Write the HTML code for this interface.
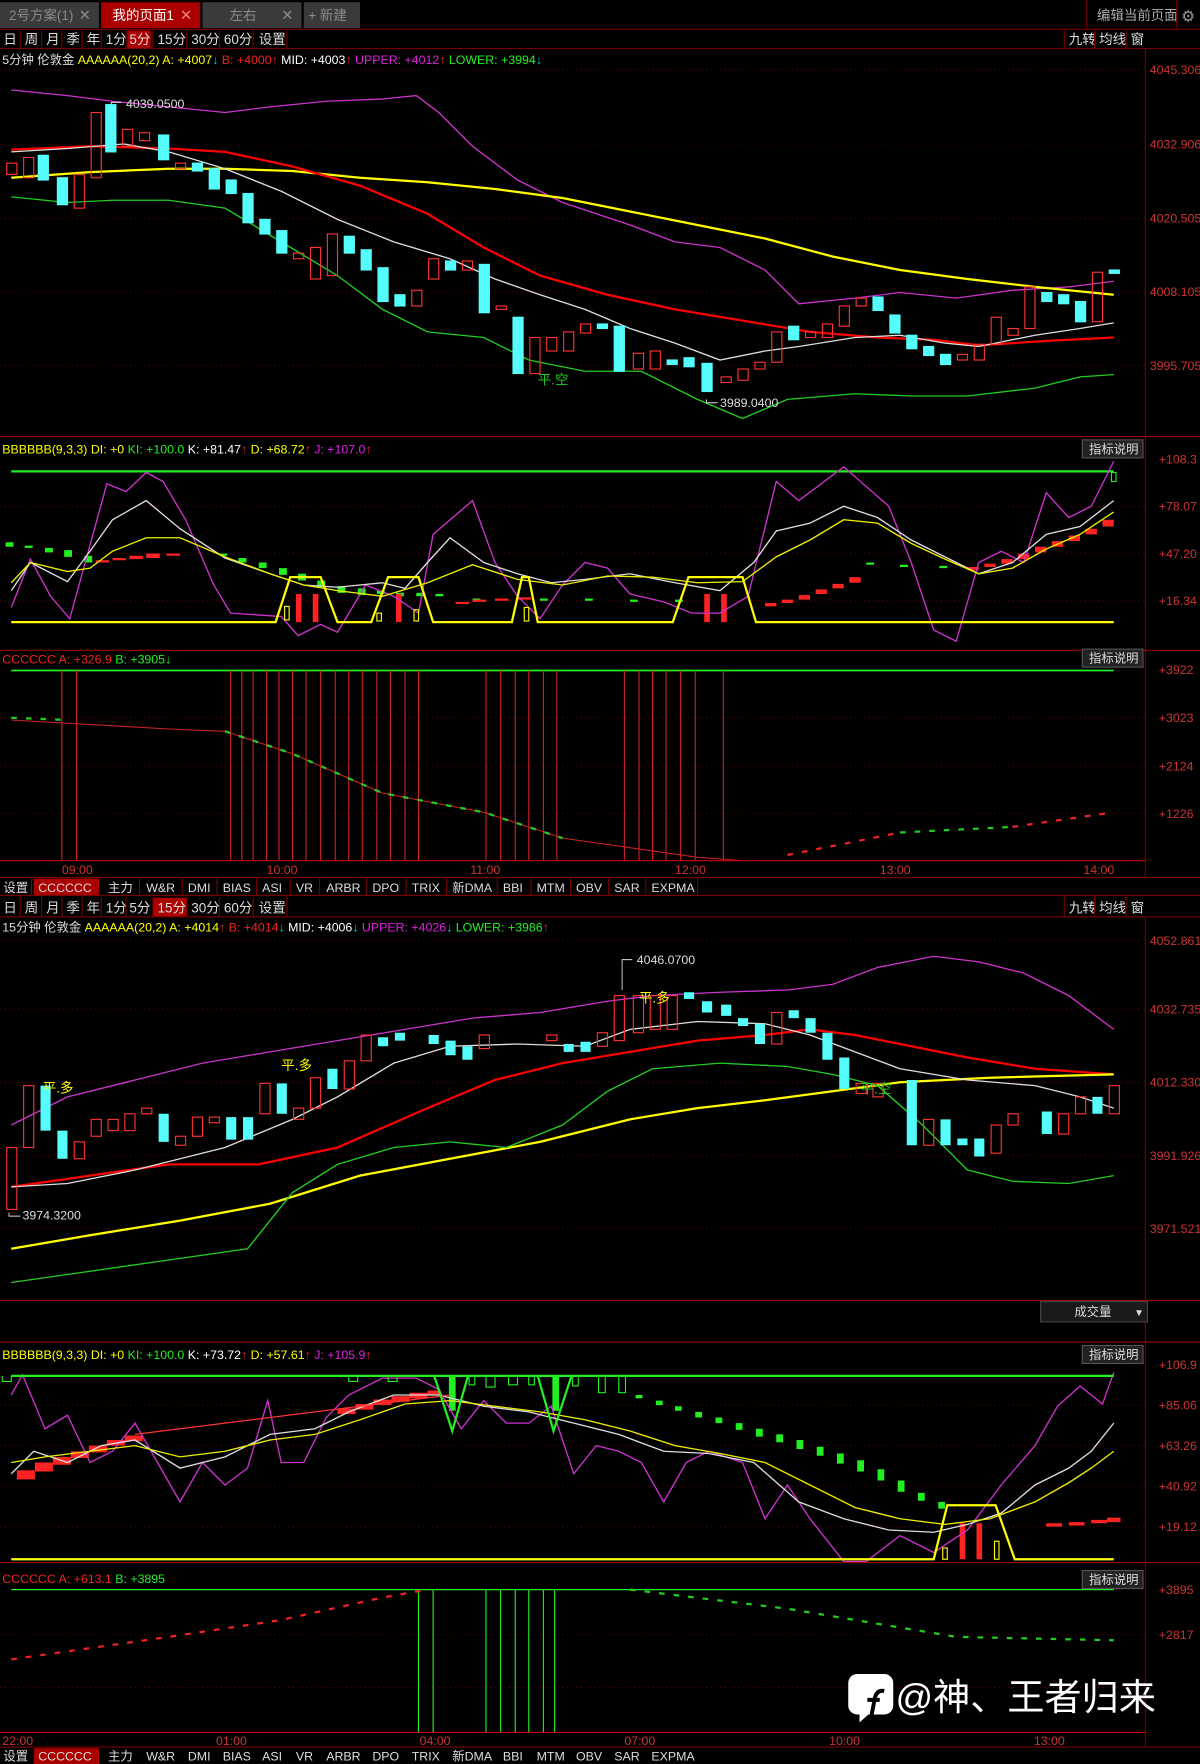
<!DOCTYPE html>
<html><head><meta charset="utf-8"><style>
html,body{margin:0;padding:0;background:#000;width:1200px;height:1764px;overflow:hidden}
svg{display:block}
</style></head><body>
<svg width="1200" height="1764" viewBox="0 0 1066.67 1568" xmlns="http://www.w3.org/2000/svg" font-family="Liberation Sans, Noto Sans CJK SC, sans-serif" font-size="11">
<rect width="1067" height="1568" fill="#000"/>
<!-- top tabs -->
<rect x="0" y="2" width="88" height="23" fill="#3a3a3a"/><text x="8" y="18" fill="#8a8a8a" font-size="12">2号方案(1)</text><text x="70" y="18" fill="#8a8a8a" font-size="13">✕</text>
<rect x="90" y="2" width="88" height="23" fill="#a00"/><text x="100" y="18" fill="#fff" font-size="12">我的页面1</text><text x="160" y="18" fill="#e88" font-size="13">✕</text>
<rect x="180" y="2" width="88" height="23" fill="#3a3a3a"/><text x="204" y="18" fill="#8a8a8a" font-size="12">左右</text><text x="250" y="18" fill="#8a8a8a" font-size="13">✕</text>
<rect x="270" y="2" width="50" height="23" fill="#3a3a3a"/><text x="274" y="18" fill="#8a8a8a" font-size="12">+ 新建</text>
<line x1="0" y1="26" x2="1067" y2="26" stroke="#700" />
<line x1="966" y1="0" x2="966" y2="26" stroke="#700"/><text x="975" y="18" fill="#aaa" font-size="12">编辑当前页面</text>
<line x1="1046" y1="0" x2="1046" y2="26" stroke="#700"/><text x="1050" y="19" fill="#999" font-size="14">⚙</text>
<!-- period toolbar 1 -->
<g fill="#ddd" font-size="12">
<text x="3" y="39">日</text><text x="22" y="39">周</text><text x="41" y="39">月</text><text x="59" y="39">季</text><text x="77" y="39">年</text><text x="94" y="39">1分</text>
<rect x="113" y="27" width="21" height="16" fill="#a00"/><text x="115" y="39">5分</text><text x="140" y="39">15分</text><text x="170" y="39">30分</text><text x="199" y="39">60分</text><text x="230" y="39">设置</text>
<text x="950" y="39">九转</text><text x="977" y="39">均线</text><text x="1005" y="39">窗</text></g>
<g stroke="#700"><line x1="0" y1="43" x2="1067" y2="43"/><line x1="18" y1="27" x2="18" y2="43"/><line x1="37" y1="27" x2="37" y2="43"/><line x1="55" y1="27" x2="55" y2="43"/><line x1="73" y1="27" x2="73" y2="43"/><line x1="90" y1="27" x2="90" y2="43"/><line x1="112" y1="27" x2="112" y2="43"/><line x1="136" y1="27" x2="136" y2="43"/><line x1="166" y1="27" x2="166" y2="43"/><line x1="195" y1="27" x2="195" y2="43"/><line x1="225" y1="27" x2="225" y2="43"/><line x1="255" y1="27" x2="255" y2="43"/><line x1="946" y1="27" x2="946" y2="43"/><line x1="973" y1="27" x2="973" y2="43"/><line x1="1001" y1="27" x2="1001" y2="43"/><line x1="1018" y1="43" x2="1018" y2="780"/></g>
<text x="2" y="57"><tspan fill="#ddd">5分钟  伦敦金 </tspan><tspan fill="#ff0">AAAAAA(20,2) A: +4007</tspan><tspan fill="#0cc">↓</tspan><tspan fill="#e22"> B: +4000↑</tspan><tspan fill="#fff"> MID: +4003</tspan><tspan fill="#e22">↑</tspan><tspan fill="#d2d"> UPPER: +4012</tspan><tspan fill="#e22">↑</tspan><tspan fill="#2e2"> LOWER: +3994</tspan><tspan fill="#0cc">↓</tspan></text>
<!-- grid panel1 -->
<g stroke="#500" stroke-dasharray="1 3"><line x1="0" y1="62" x2="1018" y2="62"/><line x1="0" y1="128" x2="1018" y2="128"/><line x1="0" y1="194" x2="1018" y2="194"/><line x1="0" y1="259" x2="1018" y2="259"/><line x1="0" y1="325" x2="1018" y2="325"/></g>
<g fill="#c33"><text x="1022" y="66">4045.306</text><text x="1022" y="132">4032.906</text><text x="1022" y="198">4020.505</text><text x="1022" y="263">4008.105</text><text x="1022" y="329">3995.705</text></g>
<g fill="none" stroke-width="1.2">
<polyline stroke="#c3c" points="10,80 60,85 100,90 150,95 200,100 240,95 290,90 340,88 370,85 390,100 420,130 460,160 500,180 560,200 600,215 640,220 680,240 710,270 760,265 800,260 850,265 900,258 950,255 990,250"/>
<polyline stroke="#ff0" stroke-width="2" points="10,158 80,153 150,150 200,150 260,152 320,158 380,162 440,168 500,176 560,188 620,200 680,212 740,228 800,240 860,248 920,255 990,262"/>
<polyline stroke="#f00" stroke-width="2" points="10,133 80,130 150,132 200,135 260,148 320,165 380,190 430,220 480,245 540,262 600,275 660,285 720,295 780,300 830,302 870,307 930,303 990,300"/>
<polyline stroke="#ddd" points="10,135 60,132 110,128 150,135 200,150 250,170 300,195 350,215 400,230 440,248 480,262 520,275 560,292 600,305 640,320 680,312 710,308 760,300 800,298 840,305 870,308 920,298 960,292 990,287"/>
<polyline stroke="#2c2" points="10,175 60,180 100,178 150,178 200,185 250,215 300,245 340,275 380,295 430,300 470,320 520,330 570,330 620,355 660,372 700,355 760,350 810,352 860,352 920,345 960,335 990,333"/>
</g>
<g stroke-width="1">
<g fill="#54fcfc" stroke="#54fcfc">
<rect x="34" y="138" width="9" height="22"/><rect x="51" y="158" width="9" height="24"/><rect x="94" y="93" width="9" height="42"/><rect x="141" y="120" width="9" height="22"/><rect x="171" y="145" width="9" height="7"/><rect x="186" y="150" width="9" height="18"/><rect x="201" y="160" width="9" height="12"/><rect x="216" y="172" width="9" height="26"/><rect x="231" y="195" width="9" height="13"/><rect x="246" y="205" width="9" height="20"/><rect x="306" y="210" width="9" height="15"/><rect x="321" y="222" width="9" height="18"/><rect x="336" y="238" width="9" height="30"/><rect x="351" y="262" width="9" height="10"/><rect x="396" y="232" width="9" height="8"/><rect x="426" y="235" width="9" height="43"/><rect x="456" y="282" width="9" height="50"/><rect x="531" y="288" width="9" height="4"/><rect x="546" y="290" width="9" height="40"/><rect x="593" y="320" width="9" height="4"/><rect x="608" y="318" width="9" height="8"/><rect x="624" y="323" width="9" height="25"/><rect x="701" y="290" width="9" height="12"/><rect x="776" y="264" width="9" height="12"/><rect x="791" y="280" width="9" height="16"/><rect x="806" y="298" width="9" height="12"/><rect x="821" y="308" width="9" height="8"/><rect x="836" y="315" width="9" height="9"/><rect x="926" y="260" width="9" height="8"/><rect x="941" y="262" width="9" height="8"/><rect x="956" y="268" width="9" height="18"/><rect x="986" y="240" width="9" height="3"/>
</g>
<g fill="none" stroke="#f33">
<rect x="6" y="145" width="9" height="10"/><rect x="21" y="140" width="9" height="18"/><rect x="66" y="155" width="9" height="30"/><rect x="81" y="100" width="9" height="58"/><rect x="109" y="115" width="9" height="15"/><rect x="124" y="118" width="9" height="7"/><rect x="156" y="145" width="9" height="5"/><rect x="261" y="225" width="9" height="5"/><rect x="276" y="220" width="9" height="28"/><rect x="291" y="208" width="9" height="37"/><rect x="366" y="258" width="9" height="14"/><rect x="381" y="230" width="9" height="18"/><rect x="411" y="232" width="9" height="8"/><rect x="441" y="272" width="9" height="3"/><rect x="471" y="300" width="9" height="32"/><rect x="486" y="300" width="9" height="12"/><rect x="501" y="295" width="9" height="17"/><rect x="516" y="288" width="9" height="8"/><rect x="563" y="314" width="9" height="14"/><rect x="578" y="312" width="9" height="16"/><rect x="641" y="335" width="9" height="5"/><rect x="656" y="328" width="9" height="10"/><rect x="671" y="322" width="9" height="6"/><rect x="686" y="295" width="9" height="27"/><rect x="716" y="295" width="9" height="5"/><rect x="731" y="288" width="9" height="12"/><rect x="746" y="272" width="9" height="18"/><rect x="761" y="265" width="9" height="7"/><rect x="851" y="315" width="9" height="5"/><rect x="866" y="306" width="9" height="14"/><rect x="881" y="282" width="9" height="24"/><rect x="896" y="292" width="9" height="6"/><rect x="911" y="255" width="9" height="37"/><rect x="971" y="242" width="9" height="44"/>
</g></g>
<g stroke="#ddd" fill="none" stroke-width="0.8"><polyline points="99,93 99,91 108,91"/><polyline points="628,355 628,358 638,358"/></g>
<text x="112" y="96" fill="#ddd">4039.0500</text><text x="640" y="362" fill="#ddd">3989.0400</text>
<text x="478" y="342" fill="#2c2" font-size="12">平.空</text>
<!-- panel2 -->
<line x1="0" y1="388" x2="1067" y2="388" stroke="#900"/>
<text x="2" y="403"><tspan fill="#ff0">BBBBBB(9,3,3) DI: +0 </tspan><tspan fill="#2e2">KI: +100.0 </tspan><tspan fill="#fff">K: +81.47</tspan><tspan fill="#e22">↑</tspan><tspan fill="#ff0"> D: +68.72</tspan><tspan fill="#e22">↑</tspan><tspan fill="#d2d"> J: +107.0</tspan><tspan fill="#e22">↑</tspan></text>
<rect x="962" y="391" width="54" height="16" fill="#222" stroke="#555"/><text x="968" y="403" fill="#ddd">指标说明</text>
<g stroke="#500" stroke-dasharray="1 3"><line x1="0" y1="450" x2="1018" y2="450"/><line x1="0" y1="492" x2="1018" y2="492"/><line x1="0" y1="534" x2="1018" y2="534"/></g>
<g fill="#c33"><text x="1030" y="412">+108.3</text><text x="1030" y="454">+78.07</text><text x="1030" y="496">+47.20</text><text x="1030" y="538">+16.34</text></g>
<line x1="10" y1="419" x2="990" y2="419" stroke="#2e2" stroke-width="2"/>
<g fill="#2e2"><rect x="5" y="482" width="7" height="4"/><rect x="22" y="485" width="7" height="2"/><rect x="40" y="487" width="7" height="4"/><rect x="57" y="489" width="7" height="6"/><rect x="75" y="494" width="7" height="6"/><rect x="195" y="492" width="7" height="2"/><rect x="212" y="496" width="7" height="4"/><rect x="230" y="500" width="7" height="5"/><rect x="248" y="505" width="7" height="6"/><rect x="265" y="510" width="7" height="6"/><rect x="282" y="516" width="7" height="6"/><rect x="300" y="521" width="7" height="6"/><rect x="318" y="523" width="7" height="6"/><rect x="335" y="525" width="7" height="3"/><rect x="352" y="527" width="7" height="3"/><rect x="370" y="527" width="7" height="3"/><rect x="387" y="528" width="7" height="2"/><rect x="420" y="532" width="7" height="2"/><rect x="480" y="532" width="7" height="2"/><rect x="520" y="532" width="7" height="2"/><rect x="560" y="533" width="7" height="2"/><rect x="600" y="533" width="7" height="2"/><rect x="770" y="500" width="7" height="2"/><rect x="800" y="502" width="7" height="2"/><rect x="835" y="503" width="7" height="2"/></g>
<g fill="#f22"><rect x="85" y="498" width="12" height="2"/><rect x="100" y="496" width="12" height="2"/><rect x="115" y="494" width="12" height="3"/><rect x="130" y="492" width="12" height="4"/><rect x="148" y="492" width="12" height="2"/><rect x="405" y="535" width="12" height="2"/><rect x="420" y="533" width="12" height="2"/><rect x="440" y="532" width="12" height="2"/><rect x="460" y="531" width="12" height="2"/><rect x="680" y="536" width="10" height="3"/><rect x="695" y="533" width="10" height="3"/><rect x="710" y="529" width="10" height="4"/><rect x="725" y="524" width="10" height="4"/><rect x="740" y="519" width="10" height="4"/><rect x="755" y="513" width="10" height="5"/><rect x="860" y="504" width="10" height="3"/><rect x="875" y="501" width="10" height="3"/><rect x="890" y="497" width="10" height="4"/><rect x="905" y="492" width="10" height="5"/><rect x="920" y="486" width="10" height="5"/><rect x="935" y="481" width="10" height="5"/><rect x="950" y="476" width="10" height="5"/><rect x="965" y="470" width="10" height="5"/><rect x="980" y="462" width="10" height="6"/>
<rect x="263" y="528" width="5" height="25"/><rect x="278" y="528" width="5" height="25"/><rect x="352" y="528" width="5" height="25"/><rect x="626" y="528" width="5" height="25"/><rect x="641" y="528" width="5" height="25"/></g>
<g fill="none" stroke-width="1.2">
<polyline stroke="#c3c" points="10,540 27,497 45,530 62,550 95,430 112,437 130,420 145,428 165,462 190,520 205,545 250,548 265,565 285,555 300,562 325,520 350,530 372,545 385,475 420,445 440,500 460,530 480,550 500,520 520,500 540,505 560,528 590,535 615,545 640,545 665,530 690,428 710,445 750,415 790,450 810,500 830,560 850,570 870,500 890,490 910,500 930,438 950,460 970,450 990,410"/>
<polyline stroke="#ddd" points="10,525 27,500 60,517 80,490 100,462 130,445 160,470 200,496 240,510 270,520 300,522 340,518 360,523 380,500 400,478 430,500 460,510 490,518 520,515 560,510 600,518 640,525 670,500 690,472 720,465 750,450 780,460 810,480 840,495 870,510 900,500 930,475 960,468 990,445"/>
<polyline stroke="#ee0" points="10,518 27,500 60,508 80,505 100,490 130,478 160,478 200,495 240,510 270,520 300,525 340,530 380,518 420,502 460,515 500,520 540,512 580,513 620,518 660,517 690,495 720,480 750,462 780,465 810,483 840,497 870,510 900,505 930,488 960,475 990,455"/>
<polyline stroke="#ff0" stroke-width="2" points="10,553 245,553 258,513 285,513 300,553 330,553 345,513 372,513 385,553 455,553 464,513 470,513 478,553 598,553 612,513 660,513 672,553 990,553"/>
</g>
<g fill="none" stroke="#ff0"><rect x="253" y="539" width="4" height="12"/><rect x="335" y="545" width="4" height="7"/><rect x="368" y="542" width="4" height="10"/><rect x="466" y="540" width="4" height="12"/><rect x="988" y="420" width="4" height="8" stroke="#2e2"/></g>
<!-- panel3 -->
<line x1="0" y1="578" x2="1067" y2="578" stroke="#900"/>
<text x="2" y="590"><tspan fill="#e22">CCCCCC A: +326.9 </tspan><tspan fill="#2e2">B: +3905↓</tspan></text>
<rect x="962" y="577" width="54" height="16" fill="#222" stroke="#555"/><text x="968" y="589" fill="#ddd">指标说明</text>
<g stroke="#500" stroke-dasharray="1 3"><line x1="0" y1="638" x2="1018" y2="638"/><line x1="0" y1="681" x2="1018" y2="681"/><line x1="0" y1="723" x2="1018" y2="723"/></g>
<g fill="#c33"><text x="1030" y="599">+3922</text><text x="1030" y="642">+3023</text><text x="1030" y="685">+2124</text><text x="1030" y="727">+1226</text></g>
<line x1="10" y1="596" x2="990" y2="596" stroke="#2e2" stroke-width="1.5"/>
<g stroke="#c22"><path d="M55 596V765M68 596V765M205 596V765M215 596V765M225 596V765M237 596V765M248 596V765M260 596V765M272 596V765M285 596V765M298 596V765M310 596V765M322 596V765M335 596V765M347 596V765M360 596V765M372 596V765M432 596V765M445 596V765M458 596V765M470 596V765M483 596V765M495 596V765M555 596V765M568 596V765M580 596V765M592 596V765M605 596V765M618 596V765M643 596V765"/></g>
<polyline fill="none" stroke="#c22" points="10,640 150,648 200,650 260,670 340,705 430,722 500,745 620,762 660,765"/>
<g stroke-dasharray="5 8" fill="none" stroke-width="2"><polyline stroke="#2c2" points="10,638 60,640" /><polyline stroke="#2c2" points="200,650 260,670 340,705 430,722 500,745"/><polyline stroke="#e22" points="700,760 800,740"/><polyline stroke="#2c2" points="800,740 900,735"/><polyline stroke="#e22" points="900,735 990,722"/></g>
<!-- time axis 1 -->
<line x1="0" y1="765" x2="1018" y2="765" stroke="#c00"/>
<g fill="#c33"><text x="55" y="777">09:00</text><text x="237" y="777">10:00</text><text x="418" y="777">11:00</text><text x="600" y="777">12:00</text><text x="782" y="777">13:00</text><text x="963" y="777">14:00</text></g>
<!-- toolbar -->
<line x1="0" y1="780" x2="1067" y2="780" stroke="#700"/>
<g fill="#ddd"><rect x="30" y="781" width="58" height="15" fill="#a00"/>
<text x="3" y="793">设置</text><text x="34" y="793">CCCCCC</text><text x="96" y="793">主力</text><text x="130" y="793">W&amp;R</text><text x="167" y="793">DMI</text><text x="198" y="793">BIAS</text><text x="233" y="793">ASI</text><text x="263" y="793">VR</text><text x="290" y="793">ARBR</text><text x="331" y="793">DPO</text><text x="366" y="793">TRIX</text><text x="402" y="793">新DMA</text><text x="447" y="793">BBI</text><text x="477" y="793">MTM</text><text x="512" y="793">OBV</text><text x="546" y="793">SAR</text><text x="579" y="793">EXPMA</text></g>
<g stroke="#700"><line x1="0" y1="796" x2="1067" y2="796"/><line x1="28" y1="781" x2="28" y2="796"/><line x1="124" y1="781" x2="124" y2="796"/><line x1="162" y1="781" x2="162" y2="796"/><line x1="193" y1="781" x2="193" y2="796"/><line x1="228" y1="781" x2="228" y2="796"/><line x1="258" y1="781" x2="258" y2="796"/><line x1="284" y1="781" x2="284" y2="796"/><line x1="326" y1="781" x2="326" y2="796"/><line x1="361" y1="781" x2="361" y2="796"/><line x1="397" y1="781" x2="397" y2="796"/><line x1="442" y1="781" x2="442" y2="796"/><line x1="472" y1="781" x2="472" y2="796"/><line x1="507" y1="781" x2="507" y2="796"/><line x1="541" y1="781" x2="541" y2="796"/><line x1="574" y1="781" x2="574" y2="796"/><line x1="620" y1="781" x2="620" y2="796"/></g>
<g fill="#ddd" font-size="12">
<text x="3" y="811">日</text><text x="22" y="811">周</text><text x="41" y="811">月</text><text x="59" y="811">季</text><text x="77" y="811">年</text><text x="94" y="811">1分</text><text x="115" y="811">5分</text>
<rect x="136" y="798" width="30" height="17" fill="#a00"/><text x="140" y="811">15分</text><text x="170" y="811">30分</text><text x="199" y="811">60分</text><text x="230" y="811">设置</text>
<text x="950" y="811">九转</text><text x="977" y="811">均线</text><text x="1005" y="811">窗</text></g>
<g stroke="#700"><line x1="0" y1="815" x2="1067" y2="815"/><line x1="18" y1="797" x2="18" y2="815"/><line x1="37" y1="797" x2="37" y2="815"/><line x1="55" y1="797" x2="55" y2="815"/><line x1="73" y1="797" x2="73" y2="815"/><line x1="90" y1="797" x2="90" y2="815"/><line x1="112" y1="797" x2="112" y2="815"/><line x1="136" y1="797" x2="136" y2="815"/><line x1="166" y1="797" x2="166" y2="815"/><line x1="195" y1="797" x2="195" y2="815"/><line x1="225" y1="797" x2="225" y2="815"/><line x1="255" y1="797" x2="255" y2="815"/><line x1="946" y1="797" x2="946" y2="815"/><line x1="973" y1="797" x2="973" y2="815"/><line x1="1001" y1="797" x2="1001" y2="815"/><line x1="1018" y1="815" x2="1018" y2="1552"/></g>
<text x="2" y="828"><tspan fill="#ddd">15分钟  伦敦金 </tspan><tspan fill="#ff0">AAAAAA(20,2) A: +4014</tspan><tspan fill="#e22">↑</tspan><tspan fill="#e22"> B: +4014</tspan><tspan fill="#0cc">↓</tspan><tspan fill="#fff"> MID: +4006</tspan><tspan fill="#0cc">↓</tspan><tspan fill="#d2d"> UPPER: +4026</tspan><tspan fill="#0cc">↓</tspan><tspan fill="#2e2"> LOWER: +3986</tspan><tspan fill="#e22">↑</tspan></text>
<!-- panel4 -->
<g stroke="#500" stroke-dasharray="1 3"><line x1="0" y1="836" x2="1018" y2="836"/><line x1="0" y1="897" x2="1018" y2="897"/><line x1="0" y1="962" x2="1018" y2="962"/><line x1="0" y1="1027" x2="1018" y2="1027"/><line x1="0" y1="1092" x2="1018" y2="1092"/></g>
<g fill="#c33"><text x="1022" y="840">4052.861</text><text x="1022" y="901">4032.735</text><text x="1022" y="966">4012.330</text><text x="1022" y="1031">3991.926</text><text x="1022" y="1096">3971.521</text></g>
<g fill="none" stroke-width="1.2">
<polyline stroke="#c3c" points="10,1000 60,975 120,960 180,945 240,935 300,925 360,915 420,905 480,900 540,890 580,885 640,882 700,880 740,875 780,860 830,850 870,855 910,865 950,885 990,915"/>
<polyline stroke="#f00" stroke-width="2" points="10,1055 80,1045 150,1035 230,1035 300,1020 380,985 440,960 500,945 560,935 620,925 680,920 720,915 760,920 800,928 860,940 920,950 990,955"/>
<polyline stroke="#ff0" stroke-width="2" points="10,1110 80,1098 160,1085 240,1070 320,1045 400,1030 480,1015 560,995 620,985 680,978 740,970 800,962 880,958 990,955"/>
<polyline stroke="#ddd" points="10,1055 60,1052 120,1040 200,1020 260,995 300,975 350,945 400,930 460,928 520,930 560,915 620,908 680,910 720,920 760,935 800,950 860,960 920,965 960,975 990,985"/>
<polyline stroke="#2c2" points="10,1140 80,1130 150,1120 220,1110 260,1060 300,1035 350,1020 400,1015 450,1020 500,1000 540,970 580,950 640,945 700,948 740,955 780,965 820,1000 860,1040 900,1050 950,1052 990,1045"/>
</g>
<g fill="#54fcfc"><rect x="36" y="965" width="9" height="40"/><rect x="51" y="1005" width="9" height="25"/><rect x="141" y="990" width="9" height="25"/><rect x="201" y="993" width="9" height="20"/><rect x="216" y="993" width="9" height="20"/><rect x="246" y="963" width="9" height="27"/><rect x="291" y="950" width="9" height="18"/><rect x="336" y="922" width="9" height="8"/><rect x="351" y="918" width="9" height="7"/><rect x="381" y="920" width="9" height="8"/><rect x="396" y="925" width="9" height="13"/><rect x="411" y="930" width="9" height="12"/><rect x="501" y="928" width="9" height="7"/><rect x="516" y="926" width="9" height="9"/><rect x="608" y="882" width="9" height="6"/><rect x="624" y="890" width="9" height="10"/><rect x="641" y="893" width="9" height="10"/><rect x="656" y="905" width="9" height="7"/><rect x="671" y="910" width="9" height="18"/><rect x="701" y="898" width="9" height="7"/><rect x="716" y="905" width="9" height="13"/><rect x="731" y="918" width="9" height="24"/><rect x="746" y="940" width="9" height="28"/><rect x="806" y="960" width="9" height="58"/><rect x="836" y="995" width="9" height="23"/><rect x="851" y="1012" width="9" height="6"/><rect x="866" y="1012" width="9" height="16"/><rect x="926" y="988" width="9" height="20"/><rect x="971" y="975" width="9" height="15"/></g>
<g fill="none" stroke="#f33"><rect x="6" y="1020" width="9" height="55"/><rect x="21" y="965" width="9" height="55"/><rect x="66" y="1015" width="9" height="15"/><rect x="81" y="995" width="9" height="15"/><rect x="96" y="995" width="9" height="10"/><rect x="111" y="990" width="9" height="15"/><rect x="126" y="985" width="9" height="5"/><rect x="156" y="1010" width="9" height="8"/><rect x="171" y="993" width="9" height="17"/><rect x="186" y="993" width="9" height="5"/><rect x="231" y="963" width="9" height="27"/><rect x="261" y="985" width="9" height="10"/><rect x="276" y="958" width="9" height="27"/><rect x="306" y="943" width="9" height="25"/><rect x="321" y="920" width="9" height="23"/><rect x="426" y="920" width="9" height="12"/><rect x="486" y="920" width="9" height="5"/><rect x="531" y="918" width="9" height="12"/><rect x="546" y="885" width="9" height="40"/><rect x="563" y="885" width="9" height="33"/><rect x="578" y="885" width="9" height="30"/><rect x="593" y="885" width="9" height="30"/><rect x="686" y="900" width="9" height="28"/><rect x="761" y="963" width="9" height="9"/><rect x="776" y="963" width="9" height="12"/><rect x="821" y="995" width="9" height="23"/><rect x="881" y="1000" width="9" height="25"/><rect x="896" y="990" width="9" height="10"/><rect x="941" y="990" width="9" height="18"/><rect x="956" y="975" width="9" height="15"/><rect x="986" y="965" width="9" height="25"/></g>
<g stroke="#ddd" fill="none" stroke-width="0.8"><polyline points="553,880 553,853 562,853"/><polyline points="8,1078 8,1081 18,1081"/></g>
<text x="566" y="857" fill="#ddd">4046.0700</text><text x="20" y="1084" fill="#ddd">3974.3200</text>
<g fill="#ff0" font-size="12"><text x="38" y="971">平.多</text><text x="250" y="951">平.多</text><text x="568" y="891">平.多</text></g><text x="765" y="972" fill="#2c2" font-size="12">平.空</text>
<line x1="0" y1="1156" x2="1067" y2="1156" stroke="#900"/>
<rect x="925" y="1157" width="95" height="18" fill="#1a1a1a" stroke="#444"/><text x="955" y="1170" fill="#ddd">成交量</text><text x="1008" y="1170" fill="#ddd" font-size="9">▼</text>
<line x1="0" y1="1193" x2="1067" y2="1193" stroke="#900"/>
<!-- panel5 -->
<text x="2" y="1208"><tspan fill="#ff0">BBBBBB(9,3,3) DI: +0 </tspan><tspan fill="#2e2">KI: +100.0 </tspan><tspan fill="#fff">K: +73.72</tspan><tspan fill="#e22">↑</tspan><tspan fill="#ff0"> D: +57.61</tspan><tspan fill="#e22">↑</tspan><tspan fill="#d2d"> J: +105.9</tspan><tspan fill="#e22">↑</tspan></text>
<rect x="962" y="1196" width="54" height="16" fill="#222" stroke="#555"/><text x="968" y="1208" fill="#ddd">指标说明</text>
<g stroke="#500" stroke-dasharray="1 3"><line x1="0" y1="1249" x2="1018" y2="1249"/><line x1="0" y1="1285" x2="1018" y2="1285"/><line x1="0" y1="1321" x2="1018" y2="1321"/><line x1="0" y1="1357" x2="1018" y2="1357"/></g>
<g fill="#c33"><text x="1030" y="1217">+106.9</text><text x="1030" y="1253">+85.06</text><text x="1030" y="1289">+63.26</text><text x="1030" y="1325">+40.92</text><text x="1030" y="1361">+19.12</text></g>
<g fill="#f22"><rect x="15" y="1307" width="16" height="8"/><rect x="31" y="1300" width="16" height="8"/><rect x="47" y="1295" width="16" height="7"/><rect x="63" y="1290" width="16" height="6"/><rect x="79" y="1285" width="16" height="6"/><rect x="95" y="1280" width="16" height="5"/><rect x="111" y="1276" width="16" height="5"/><rect x="300" y="1252" width="16" height="5"/><rect x="316" y="1248" width="16" height="5"/><rect x="332" y="1244" width="16" height="5"/><rect x="348" y="1241" width="16" height="5"/><rect x="364" y="1238" width="16" height="5"/><rect x="380" y="1236" width="12" height="4"/><rect x="930" y="1354" width="14" height="3"/><rect x="950" y="1353" width="14" height="3"/><rect x="970" y="1351" width="14" height="3"/><rect x="984" y="1349" width="12" height="4"/>
<rect x="853" y="1354" width="5" height="32"/><rect x="868" y="1354" width="5" height="32"/></g>
<g fill="#2e2"><rect x="399" y="1223" width="6" height="31"/><rect x="491" y="1223" width="6" height="31"/><rect x="565" y="1240" width="6" height="3"/><rect x="583" y="1245" width="6" height="4"/><rect x="600" y="1250" width="6" height="4"/><rect x="618" y="1255" width="6" height="5"/><rect x="636" y="1260" width="6" height="5"/><rect x="654" y="1265" width="6" height="6"/><rect x="672" y="1270" width="6" height="7"/><rect x="690" y="1275" width="6" height="7"/><rect x="708" y="1280" width="6" height="8"/><rect x="726" y="1286" width="6" height="8"/><rect x="744" y="1292" width="6" height="9"/><rect x="762" y="1298" width="6" height="10"/><rect x="780" y="1306" width="6" height="10"/><rect x="798" y="1316" width="6" height="10"/><rect x="816" y="1327" width="6" height="7"/><rect x="834" y="1335" width="6" height="6"/></g>
<g fill="none" stroke-width="1.2">
<polyline stroke="#c3c" points="10,1240 20,1222 40,1270 60,1258 80,1300 100,1290 120,1265 140,1300 160,1335 180,1300 200,1320 220,1305 238,1245 250,1300 270,1300 290,1260 310,1240 340,1225 370,1225 390,1235 410,1270 430,1245 450,1265 470,1265 490,1250 510,1310 530,1285 550,1290 570,1300 590,1335 610,1300 630,1290 660,1300 680,1350 700,1320 720,1350 750,1388 770,1388 800,1365 830,1380 860,1360 890,1320 920,1285 940,1250 960,1232 980,1248 990,1220"/>
<polyline stroke="#ddd" points="10,1310 30,1290 60,1300 90,1285 120,1280 160,1305 200,1295 240,1275 280,1270 310,1255 350,1240 390,1240 430,1250 470,1255 510,1265 550,1275 590,1290 630,1292 670,1300 710,1335 750,1350 790,1360 830,1362 860,1355 890,1345 920,1320 950,1305 970,1290 990,1265"/>
<polyline stroke="#ee0" points="10,1300 40,1295 80,1290 120,1285 160,1295 200,1290 240,1280 280,1275 320,1262 360,1248 400,1245 440,1250 480,1255 520,1262 560,1272 600,1285 640,1292 680,1300 720,1320 760,1340 800,1350 840,1355 880,1350 920,1335 950,1318 970,1305 990,1290"/>
<polyline stroke="#f33" points="120,1275 400,1240"/>
<line x1="10" y1="1223" x2="990" y2="1223" stroke="#2e2" stroke-width="2"/>
<polyline stroke="#2e2" stroke-width="2" points="386,1223 402,1272 416,1223"/>
<polyline stroke="#2e2" stroke-width="2" points="478,1223 492,1272 508,1223"/>
<polyline stroke="#ff0" stroke-width="2" points="10,1386 830,1386 842,1338 885,1338 902,1386 990,1386"/>
</g>
<g fill="none" stroke="#ff0"><rect x="838" y="1376" width="4" height="10"/><rect x="884" y="1370" width="4" height="16"/></g>
<g fill="none" stroke="#2e2"><path d="M2 1223v5h8v-5M310 1223v5h8v-5M345 1223v5h8v-5M417 1223v8h5v-8M432 1223v10h8v-10M452 1223v8h8v-8M470 1223v8h5v-8M509 1223v9h5v-9M532 1223v15h6v-15M550 1223v15h6v-15"/></g>
<!-- panel6 -->
<line x1="0" y1="1389" x2="1067" y2="1389" stroke="#900"/>
<text x="2" y="1407"><tspan fill="#e22">CCCCCC A: +613.1 </tspan><tspan fill="#2e2">B: +3895</tspan></text>
<rect x="962" y="1396" width="54" height="16" fill="#222" stroke="#555"/><text x="968" y="1408" fill="#ddd">指标说明</text>
<g stroke="#500" stroke-dasharray="1 3"><line x1="0" y1="1453" x2="1018" y2="1453"/><line x1="0" y1="1500" x2="1018" y2="1500"/></g>
<g fill="#c33"><text x="1030" y="1417">+3895</text><text x="1030" y="1457">+2817</text></g>
<line x1="10" y1="1413" x2="990" y2="1413" stroke="#2e2" stroke-width="1.2"/>
<g stroke="#2e2"><path d="M372 1413V1540M385 1413V1540M432 1413V1540M445 1413V1540M458 1413V1540M470 1413V1540M483 1413V1540M493 1413V1540"/></g>
<g fill="none" stroke-dasharray="5 8" stroke-width="2"><polyline stroke="#e22" points="10,1475 150,1455 250,1440 340,1420 380,1413"/><polyline stroke="#2c2" points="560,1413 700,1430 850,1455 990,1458"/></g>
<line x1="0" y1="1540" x2="1018" y2="1540" stroke="#c00"/>
<g fill="#c33"><text x="2" y="1551">22:00</text><text x="192" y="1551">01:00</text><text x="373" y="1551">04:00</text><text x="555" y="1551">07:00</text><text x="737" y="1551">10:00</text><text x="919" y="1551">13:00</text></g>
<line x1="0" y1="1553" x2="1067" y2="1553" stroke="#700"/>
<g fill="#ddd"><rect x="30" y="1554" width="58" height="14" fill="#a00"/>
<text x="3" y="1565">设置</text><text x="34" y="1565">CCCCCC</text><text x="96" y="1565">主力</text><text x="130" y="1565">W&amp;R</text><text x="167" y="1565">DMI</text><text x="198" y="1565">BIAS</text><text x="233" y="1565">ASI</text><text x="263" y="1565">VR</text><text x="290" y="1565">ARBR</text><text x="331" y="1565">DPO</text><text x="366" y="1565">TRIX</text><text x="402" y="1565">新DMA</text><text x="447" y="1565">BBI</text><text x="477" y="1565">MTM</text><text x="512" y="1565">OBV</text><text x="546" y="1565">SAR</text><text x="579" y="1565">EXPMA</text></g>
<!-- watermark -->
<path d="M762 1488h24a8 8 0 0 1 8 8v20a8 8 0 0 1-8 8h-14l-8 7v-7h-2a8 8 0 0 1-8-8v-20a8 8 0 0 1 8-8z" fill="#fff"/>
<path d="M774 1528l4-20q2-6 8-5M771 1511h11" stroke="#000" stroke-width="3.5" fill="none"/>
<text x="796" y="1520" fill="#fff" font-size="33">@神、王者归来</text>
</svg>
</body></html>
